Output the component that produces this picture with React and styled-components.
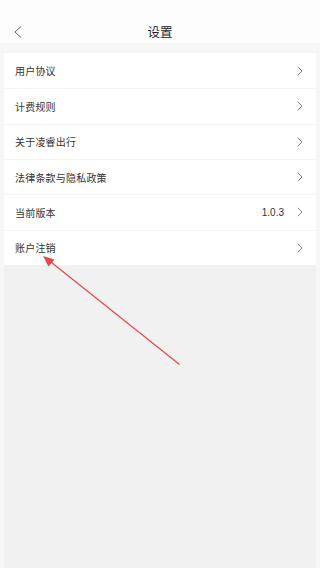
import React from "react";
import styled, { createGlobalStyle } from "styled-components";

const Global = createGlobalStyle`
  html, body { margin: 0; padding: 0; }
  body {
    background: #f6f6f6;
    font-family: "Noto Sans CJK SC", "Noto Sans", sans-serif;
  }
  #root { min-height: 568px; }
`;

const Page = styled.div`
  width: 320px;
  height: 568px;
  display: flex;
  flex-direction: column;
  background: #f6f6f6;
  position: relative;
  overflow: hidden;
`;

const Header = styled.header`
  height: 43px;
  box-sizing: border-box;
  padding-top: 20px;
  background: #fdfdfd;
  display: grid;
  grid-template-columns: 40px 1fr 40px;
  align-items: center;
`;

const BackButton = styled.div`
  display: flex;
  align-items: center;
  padding-left: 14px;
  height: 23px;
`;

const Title = styled.h1`
  margin: 0;
  text-align: center;
  font-size: 12.5px;
  font-weight: 400;
  color: #222;
  line-height: 23px;
`;

const Body = styled.main`
  flex: 1;
  display: flex;
  flex-direction: column;
  margin: 10px 4px 0;
  background: #f1f1f1;
`;

const Card = styled.ul`
  list-style: none;
  margin: 0;
  padding: 0;
  background: #fff;
`;

const Row = styled.li`
  height: 35.33px;
  box-sizing: border-box;
  display: flex;
  align-items: center;
  padding: 0 13px 0 11px;
  border-top: ${(p) => (p.$first ? "none" : "1px solid #f4f4f4")};
`;

const Label = styled.span`
  flex: 1;
  font-size: 10px;
  color: #333;
  letter-spacing: 0.2px;
`;

const Value = styled.span`
  font-family: "Liberation Sans", Arial, sans-serif;
  font-size: 10px;
  color: #333;
  margin-right: 13px;
`;

const Chevron = () => (
  <svg width="6" height="10" viewBox="0 0 6 10">
    <path d="M0.8 0.8 L5 5 L0.8 9.2" fill="none" stroke="#777" strokeWidth="0.9" />
  </svg>
);

const BackIcon = () => (
  <svg width="8" height="12" viewBox="0 0 8 12">
    <path d="M7 0.5 L1 6 L7 11.5" fill="none" stroke="#555" strokeWidth="0.9" />
  </svg>
);

const Annotation = styled.svg`
  position: absolute;
  left: 0;
  top: 0;
  pointer-events: none;
`;

const items = [
  { label: "用户协议" },
  { label: "计费规则" },
  { label: "关于凌睿出行" },
  { label: "法律条款与隐私政策" },
  { label: "当前版本", value: "1.0.3" },
  { label: "账户注销" },
];

export default function App() {
  return (
    <Page>
      <Global />
      <Header>
        <BackButton>
          <BackIcon />
        </BackButton>
        <Title>设置</Title>
        <span />
      </Header>
      <Body>
        <Card>
          {items.map((it, i) => (
            <Row key={it.label} $first={i === 0}>
              <Label>{it.label}</Label>
              {it.value && <Value>{it.value}</Value>}
              <Chevron />
            </Row>
          ))}
        </Card>
      </Body>
      <Annotation width="320" height="568" viewBox="0 0 320 568">
        <line x1="179.5" y1="364.5" x2="49" y2="260.5" stroke="#e9474a" strokeWidth="1.2" />
        <polygon points="43,256 54.5,259.5 48.5,266.5" fill="#e9474a" />
      </Annotation>
    </Page>
  );
}
